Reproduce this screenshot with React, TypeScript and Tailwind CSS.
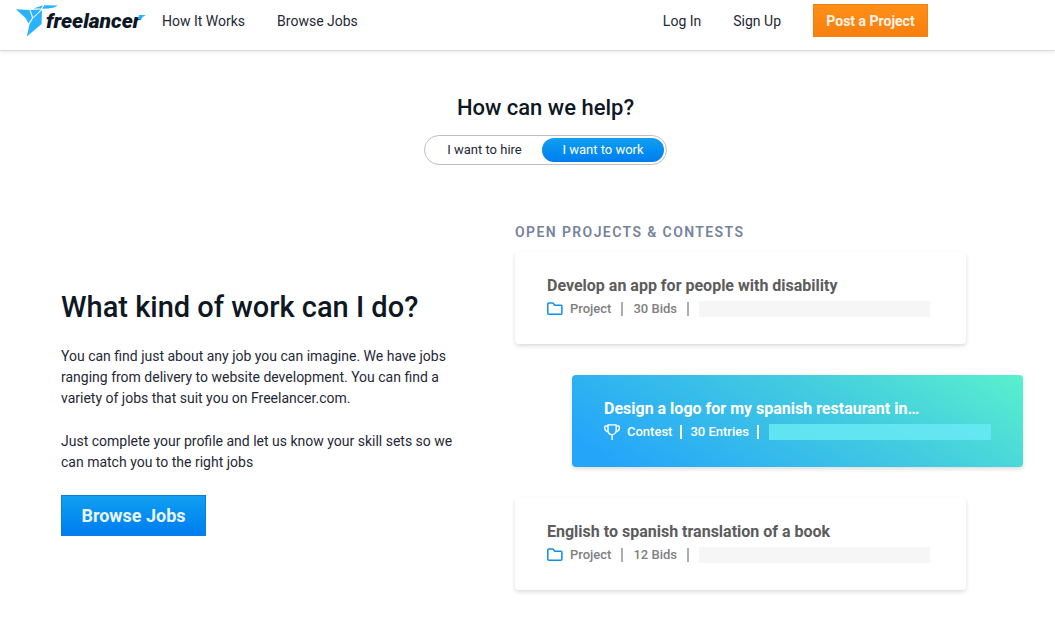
type Job = {
    title: string;
    type: "Project" | "Contest";
    count: string;
    featured?: boolean;
};

const jobs: Job[] = [
    { title: "Develop an app for people with disability", type: "Project", count: "30 Bids" },
    { title: "Design a logo for my spanish restaurant in…", type: "Contest", count: "30 Entries", featured: true },
    { title: "English to spanish translation of a book", type: "Project", count: "12 Bids" },
];

function Logo() {
    return (
        <a href="#" aria-label="freelancer" className="flex h-[33px] w-[130px] items-center">
            <svg viewBox="0 0 42 34" className="-mr-3 h-[34px] w-[42px] shrink-0" fill="#29b2fe">
                <path d="M0 5.2 13.5 6 16 13.7 12.6 19.5 9.5 14z" />
                <path d="M14.4 6 25 5.6 17.2 13.2z" />
                <path d="M27 1.2 25 4.6 17.5 4.4z" />
                <path d="M28.2 1.2 42 1.6 38 3.6 32.5 4.4 26.4 4.7z" />
                <path d="M26 6 25.6 20 10.8 32.5 13.6 20 17 14.6z" />
            </svg>
            <span className="relative text-[21px] leading-6 font-black italic text-[#0e1724]">
                freelancer
                <svg viewBox="0 0 8 5" className="absolute top-1.5 -right-1.5 h-[5px] w-2" fill="#29b2fe">
                    <path d="M1 0h7L4.5 2 3 5 0 4z" />
                </svg>
            </span>
        </a>
    );
}

function FolderIcon() {
    return (
        <svg viewBox="0 0 16 14" className="h-3.5 w-4" fill="none" stroke="#0e8ee9" strokeWidth="1.5" strokeLinejoin="round">
            <path d="M1.8 1h4.1l1.9 2.2h6.1a1 1 0 0 1 1 1v7.1a1 1 0 0 1-1 1H1.8a1 1 0 0 1-1-1V2a1 1 0 0 1 1-1z" />
        </svg>
    );
}

function TrophyIcon() {
    return (
        <svg viewBox="0 0 16 16" className="h-4 w-4" fill="none" stroke="currentColor" strokeWidth="1.4" strokeLinejoin="round">
            <path d="M4 .9h8.2v5.3c0 2.6-1.8 4.4-4.1 4.4S4 8.800 4 6.200z" />
            <path d="M4 2H1.700Q.8 2 .8 3v1.300c0 1.800 1.300 3.100 3.400 3.500M12.200 2h2.200q.9 0 .9 1v1.300c0 1.800-1.300 3.100-3.400 3.500M8.100 10.600V16" />
        </svg>
    );
}

function JobCard({ job }: { job: Job }) {
    const card = job.featured
        ? "ml-[57px] bg-linear-[31deg,#25a5fa_8%,#42cbe0_60%,#5af0cd] text-white"
        : "mr-[57px] bg-white text-[#808080]";

    return (
        <li className={`rounded-sm px-8 pt-[22px] pb-6 shadow-[0_2px_4px_rgba(0,0,0,0.14)] ${card}`}>
            <h3 className={`truncate text-base leading-6 ${job.featured ? "font-bold" : "font-bold text-[#5c5c5c]"}`}>
                {job.title}
            </h3>
            <div className="flex h-[22px] items-center text-[13px] font-medium">
                {job.type === "Project" ? <FolderIcon /> : <TrophyIcon />}
                <span className="ml-[7px]">{job.type}</span>
                <span className={`h-3.5 w-0.5 ${job.featured ? "mx-2 bg-white" : "mx-2.5 bg-[#adadad]"}`} />
                <span>{job.count}</span>
                <span className={`h-3.5 w-0.5 ${job.featured ? "mr-2.5 ml-2 bg-white" : "mx-2.5 bg-[#adadad]"}`} />
                <span className={job.featured ? "h-4 flex-1 bg-[#66e8f3]/90" : "mr-1 h-4 flex-1 bg-[#f6f6f6]"} />
            </div>
        </li>
    );
}

export default function App() {
    return (
        <div className="min-h-screen bg-white font-['Roboto',sans-serif] text-sm text-[#1f2836]">
            <header className="flex items-center justify-between border-b border-[#dedede] pt-1 pr-[127px] pb-[13px] pl-4 shadow-[0_1px_3px_rgba(0,0,0,0.1)]">
                <nav className="flex items-center gap-8">
                    <div className="-mr-4">
                        <Logo />
                    </div>
                    <a href="#">How It Works</a>
                    <a href="#">Browse Jobs</a>
                </nav>
                <div className="flex items-center gap-8">
                    <a href="#">Log In</a>
                    <a href="#">Sign Up</a>
                    <button className="h-[33px] w-[115px] border border-[#f77f0e] bg-linear-to-b from-[#ff8f17] to-[#f77f0e] font-bold text-[#fff3e8]">
                        Post a Project
                    </button>
                </div>
            </header>

            <main>
                <section className="flex flex-col items-center pt-[43px] pl-9">
                    <h1 className="text-[22px] leading-7 font-medium text-[#0e1724]">How can we help?</h1>
                    <div className="mt-[13px] flex rounded-full border border-[#bfbfbf] p-0.5 text-[13px]">
                        <button className="h-6 w-[115px] rounded-full">I want to hire</button>
                        <button className="h-6 w-[122px] rounded-full bg-linear-to-b from-[#139ff0] to-[#007df0] text-white">
                            I want to work
                        </button>
                    </div>
                </section>

                <section className="mt-14 grid grid-cols-[454fr_508fr] items-start pr-8 pb-8 pl-[61px]">
                    <div className="pt-[66px] pr-10">
                        <h2 className="text-[29px] leading-10 font-medium text-[#0e1724]">What kind of work can I do?</h2>
                        <p className="mt-[19px] leading-[21px]">
                            You can find just about any job you can imagine. We have jobs ranging from delivery to website
                            development. You can find a variety of jobs that suit you on Freelancer.com.
                        </p>
                        <p className="mt-[22px] leading-[21px]">
                            Just complete your profile and let us know your skill sets so we can match you to the right jobs
                        </p>
                        <button className="mt-[22px] h-[41px] w-[145px] border border-[#0a7fe0] bg-linear-to-b from-[#139ff0] to-[#007df0] text-lg font-bold text-[#eaf5ff]">
                            Browse Jobs
                        </button>
                    </div>
                    <div>
                        <h2 className="leading-[22px] font-semibold tracking-widest text-[#76839a]">OPEN PROJECTS &amp; CONTESTS</h2>
                        <ul className="mt-[9px] flex flex-col gap-[31px]">
                            {jobs.map((job) => (
                                <JobCard key={job.title} job={job} />
                            ))}
                        </ul>
                    </div>
                </section>
            </main>
        </div>
    );
}
